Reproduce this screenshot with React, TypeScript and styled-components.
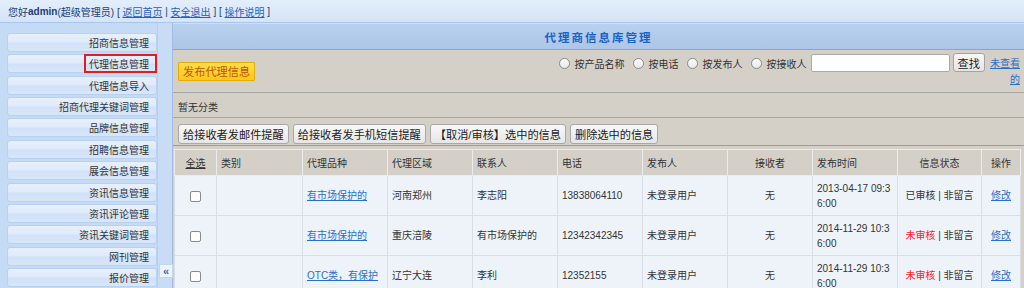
import styled, { createGlobalStyle } from "styled-components"

const GlobalStyle = createGlobalStyle`
  html, body {
    margin: 0;
    padding: 0;
    overflow: hidden;
  }
  body {
    background: #c5daf5;
    color: #333;
    font-family: "Liberation Sans", "Noto Sans CJK SC", sans-serif;
    font-size: 10px;
  }
`

const TopBar = styled.div`
  align-items: center;
  background: linear-gradient(#e3eefb, #d4e4f8);
  border-bottom: 1px solid #aac5ea;
  color: #1d3d78;
  display: flex;
  height: 22px;
  padding-left: 8px;
  white-space: pre;
`

const TopLink = styled.a`
  color: #2a5fb4;
  text-decoration: underline;
`

const Layout = styled.div`
  display: flex;
  min-height: 300px;
`

const Sidebar = styled.nav`
  box-sizing: border-box;
  display: flex;
  flex-direction: column;
  gap: 2.36px;
  padding: 10px 0 0 7px;
  width: 157px;
`

const MenuItem = styled.div`
  background: linear-gradient(#e6f0fd 0%, #dfeafb 48%, #d1e1f8 52%, #d8e6f9 100%);
  border: 1px solid #b9d0f0;
  border-radius: 3px;
  box-sizing: border-box;
  display: flex;
  height: 19px;
  justify-content: flex-end;
`

const MenuLabel = styled.span<{ $active?: boolean }>`
  align-items: center;
  border: 2px solid ${(p) => (p.$active ? "#e21d1d" : "transparent")};
  color: #333;
  display: flex;
  margin: -1px -1px -1px 0;
  padding: 0 6px 0 3px;
`

const Splitter = styled.div`
  background: #c9dcf5;
  border-left: 1px solid #b7cfee;
  border-right: 1px solid #a3bddf;
  box-sizing: border-box;
  width: 16px;
`

const CollapseButton = styled.div`
  align-items: center;
  background: #eef4fd;
  border: 1px solid #c3d6ef;
  color: #2e6bc0;
  display: flex;
  font-size: 11px;
  font-weight: bold;
  height: 12px;
  justify-content: center;
  margin: 241px 0 0 1px;
  width: 12px;
`

const Main = styled.main`
  background: #d4d0c8;
  display: flex;
  flex: 1;
  flex-direction: column;
`

const TitleBar = styled.div`
  align-items: center;
  background: linear-gradient(#b9d0ee, #adc6e7);
  border-bottom: 1px solid #8ea4c0;
  border-top: 1px solid #cfe0f5;
  color: #1b64c5;
  display: flex;
  font-size: 11.5px;
  font-weight: bold;
  height: 25px;
  justify-content: center;
  letter-spacing: 2px;
`

const Toolbar = styled.div`
  align-items: center;
  border-bottom: 1px solid #a5a5a5;
  display: flex;
  height: 42px;
  justify-content: space-between;
  padding: 0 4px 0 5px;
`

const PublishButton = styled.button`
  background: linear-gradient(#ffdc4c, #ffc81a);
  border: 1px solid #e2ae00;
  border-radius: 1px;
  color: #c25400;
  font-family: inherit;
  font-size: 11.2px;
  height: 19px;
  padding: 0 4px;
`

const SearchArea = styled.div`
  align-items: flex-start;
  display: flex;
`

const RadioLabel = styled.label`
  align-items: center;
  display: flex;
  gap: 5px;
  height: 18px;
  margin-left: 8px;

  &:first-child {
    margin-left: 0;
  }
`

const Radio = styled.input`
  appearance: none;
  background: linear-gradient(#fdfdfd, #e8e8e8);
  border: 1px solid #8c8c8c;
  border-radius: 50%;
  box-sizing: border-box;
  height: 11px;
  margin: 0;
  width: 11px;
`

const SearchInput = styled.input`
  background: #fff;
  border: 1px solid #a9a9a9;
  border-radius: 2px;
  box-sizing: border-box;
  height: 18px;
  margin-left: 4px;
  width: 139px;
`

const SearchButton = styled.button`
  background: linear-gradient(#f8f8f8, #e4e4e4);
  border: 1px solid #a4a4a4;
  border-radius: 3px;
  color: #222;
  font-family: inherit;
  font-size: 11.2px;
  height: 19px;
  margin: -1px 0 0 3px;
  padding: 0 4px;
`

const UnreadLink = styled.a`
  color: #2a6fca;
  line-height: 16px;
  margin: 2px 0 0 3px;
  text-align: right;
  text-decoration: underline;
  width: 32px;
`

const CategoryRow = styled.div`
  align-items: center;
  border-bottom: 1px solid #a5a5a5;
  box-sizing: border-box;
  display: flex;
  height: 25px;
  padding: 3px 0 0 5px;
`

const ActionRow = styled.div`
  align-items: flex-end;
  border-bottom: 1px solid #9c9c9c;
  box-sizing: border-box;
  display: flex;
  gap: 4px;
  height: 28px;
  padding: 0 0 1px 5px;
`

const ActionButton = styled.button`
  background: linear-gradient(#f8f8f8, #e6e6e6);
  border: 1px solid #a8a8a8;
  border-radius: 3px;
  color: #222;
  font-family: inherit;
  font-size: 11.2px;
  height: 20px;
  padding: 0 4px;
`

const TableArea = styled.div`
  padding: 3px 3px 0 1px;
`

const Table = styled.table`
  background: #eef3fa;
  border-collapse: collapse;
  table-layout: fixed;
  width: 100%;
`

const HeadCell = styled.th<{ $center?: boolean }>`
  background: #d4d0c8;
  border: 1px solid #ececec;
  color: #333;
  font-weight: normal;
  height: 25px;
  padding: 0 4px;
  text-align: ${(p) => (p.$center ? "center" : "left")};
`

const SelectAll = styled.span`
  text-decoration: underline;
`

const Cell = styled.td<{ $center?: boolean }>`
  border: 1px solid #d9dee5;
  color: #333;
  height: 39px;
  line-height: 15px;
  padding: 0 4px;
  text-align: ${(p) => (p.$center ? "center" : "left")};
  word-break: break-all;
`

const Check = styled.input`
  appearance: none;
  background: #fff;
  border: 1px solid #8a8a8a;
  border-radius: 2px;
  box-sizing: border-box;
  height: 11px;
  margin: 0;
  vertical-align: middle;
  width: 11px;
`

const Link = styled.a`
  color: #2a6fca;
  text-decoration: underline;
`

const Status = styled.span<{ $pending?: boolean }>`
  color: ${(p) => (p.$pending ? "#ff1c1c" : "#333")};
`

const menu = [
  "招商信息管理",
  "代理信息管理",
  "代理信息导入",
  "招商代理关键词管理",
  "品牌信息管理",
  "招聘信息管理",
  "展会信息管理",
  "资讯信息管理",
  "资讯评论管理",
  "资讯关键词管理",
  "网刊管理",
  "报价管理",
]

const widths = [42, 86, 85, 85, 85, 85, 85, 85, 85, 84]

interface Row {
  product: string
  region: string
  contact: string
  phone: string
  time: string
  pending: boolean
}

const rows: Row[] = [
  { product: "有市场保护的", region: "河南郑州", contact: "李志阳", phone: "13838064110", time: "2013-04-17 09:36:00", pending: false },
  { product: "有市场保护的", region: "重庆涪陵", contact: "有市场保护的", phone: "12342342345", time: "2014-11-29 10:36:00", pending: true },
  { product: "OTC类，有保护", region: "辽宁大连", contact: "李利", phone: "12352155", time: "2014-11-29 10:36:00", pending: true },
]

export default function App() {
  return (
    <>
      <GlobalStyle />
      <TopBar>
        您好<b>admin</b>(超级管理员) [ <TopLink>返回首页</TopLink> | <TopLink>安全退出</TopLink> ] [ <TopLink>操作说明</TopLink> ]
      </TopBar>
      <Layout>
        <Sidebar>
          {menu.map((item, i) => (
            <MenuItem key={item}>
              <MenuLabel $active={i === 1}>{item}</MenuLabel>
            </MenuItem>
          ))}
        </Sidebar>
        <Splitter>
          <CollapseButton>«</CollapseButton>
        </Splitter>
        <Main>
          <TitleBar>代理商信息库管理</TitleBar>
          <Toolbar>
            <PublishButton>发布代理信息</PublishButton>
            <SearchArea>
              <RadioLabel><Radio type="radio" name="by" />按产品名称</RadioLabel>
              <RadioLabel><Radio type="radio" name="by" />按电话</RadioLabel>
              <RadioLabel><Radio type="radio" name="by" />按发布人</RadioLabel>
              <RadioLabel><Radio type="radio" name="by" />按接收人</RadioLabel>
              <SearchInput type="text" />
              <SearchButton>查找</SearchButton>
              <UnreadLink>未查看的</UnreadLink>
            </SearchArea>
          </Toolbar>
          <CategoryRow>暂无分类</CategoryRow>
          <ActionRow>
            <ActionButton>给接收者发邮件提醒</ActionButton>
            <ActionButton>给接收者发手机短信提醒</ActionButton>
            <ActionButton>【取消/审核】选中的信息</ActionButton>
            <ActionButton>删除选中的信息</ActionButton>
          </ActionRow>
          <TableArea>
            <Table>
              <colgroup>
                {widths.map((w, i) => (
                  <col key={i} style={{ width: w }} />
                ))}
                <col />
              </colgroup>
              <thead>
                <tr>
                  <HeadCell $center><SelectAll>全选</SelectAll></HeadCell>
                  <HeadCell>类别</HeadCell>
                  <HeadCell>代理品种</HeadCell>
                  <HeadCell>代理区域</HeadCell>
                  <HeadCell>联系人</HeadCell>
                  <HeadCell>电话</HeadCell>
                  <HeadCell>发布人</HeadCell>
                  <HeadCell $center>接收者</HeadCell>
                  <HeadCell>发布时间</HeadCell>
                  <HeadCell $center>信息状态</HeadCell>
                  <HeadCell $center>操作</HeadCell>
                </tr>
              </thead>
              <tbody>
                {rows.map((r, i) => (
                  <tr key={i}>
                    <Cell $center><Check type="checkbox" /></Cell>
                    <Cell />
                    <Cell><Link>{r.product}</Link></Cell>
                    <Cell>{r.region}</Cell>
                    <Cell>{r.contact}</Cell>
                    <Cell>{r.phone}</Cell>
                    <Cell>未登录用户</Cell>
                    <Cell $center>无</Cell>
                    <Cell>{r.time}</Cell>
                    <Cell $center>
                      <Status $pending={r.pending}>{r.pending ? "未审核" : "已审核"}</Status> | 非留言
                    </Cell>
                    <Cell $center><Link>修改</Link></Cell>
                  </tr>
                ))}
              </tbody>
            </Table>
          </TableArea>
        </Main>
      </Layout>
    </>
  )
}
